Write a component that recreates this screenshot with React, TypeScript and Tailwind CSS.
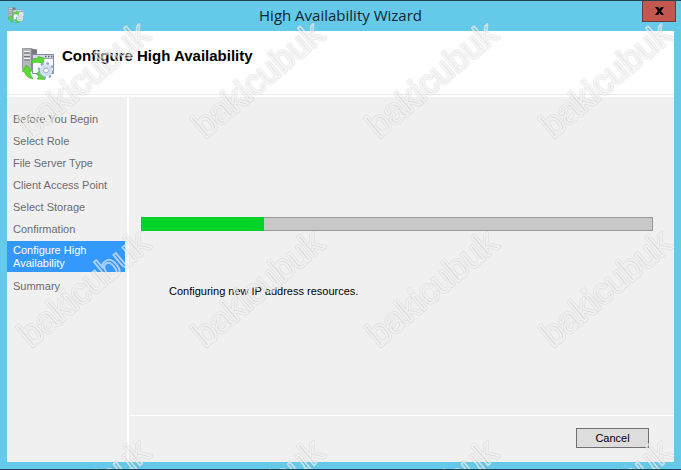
import React from 'react';
import { clsx } from 'clsx';

const steps = [
  'Before You Begin',
  'Select Role',
  'File Server Type',
  'Client Access Point',
  'Select Storage',
  'Confirmation',
  'Configure High Availability',
  'Summary',
];

const current = 'Configure High Availability';
const progress = 24;

const RoleIcon = ({ className }: { className: string }) => (
  <svg viewBox="0 0 32 32" className={className} aria-hidden="true">
    {/* server tower */}
    <path d="M0.500 0.500h9v21h-9z" fill="#b4b7bb" stroke="#85898e" strokeWidth="0.8" />
    <path d="M9.500 0.500l5.500 1v20H9.500z" fill="#777b81" />
    <path d="M2 3.500h6M2 7h6M2 10.500h6" stroke="#f1f3f5" strokeWidth="1.200" />
    <path d="M2 5h6M2 8.500h6M2 12h6" stroke="#60646a" strokeWidth="0.8" />
    {/* window */}
    <path d="M10.500 6.500h21v19h-21z" fill="#f7f8fb" stroke="#8489a0" />
    <path d="M11 7h20v3H11z" fill="#d5d9e5" />
    <path d="M11 10.500h20" stroke="#8489a0" strokeWidth="0.8" />
    <path d="M23 8.500h1.500M26 8.500h1.500M29 8.500h1.500" stroke="#555b78" strokeWidth="1.400" />
    {/* arrows */}
    <path d="M9 16.500c0-4 3-6.500 7-6V8.500l6 1.500-1 6.500-2-1.500c-3.500-1.500-7-1-10 1.500z" fill="#56dc33" stroke="#3eae24" strokeWidth="0.6" />
    <path d="M4.500 17l6 6-2.500.5c.2 3 1.300 5 3 7-4.500 0-8-3-8.500-7L0 24z" fill="#56dc33" stroke="#3eae24" strokeWidth="0.6" />
    <path d="M18 22l5 9.500-8-.5 2-2-2.500-3z" fill="#56dc33" stroke="#3eae24" strokeWidth="0.6" />
    {/* gear */}
    <circle cx="24" cy="22.500" r="7" fill="none" stroke="#8ea6c2" strokeWidth="2.400" strokeDasharray="2.700 2.800" />
    <circle cx="24" cy="22.500" r="4.400" fill="none" stroke="#d3dfec" strokeWidth="3.600" />
    <circle cx="24" cy="22.500" r="2.400" fill="#fff" stroke="#8299b5" strokeWidth="0.8" />
  </svg>
);

const Watermark = () => (
  <svg className="pointer-events-none absolute inset-0 h-full w-full" aria-hidden="true">
    <defs>
      <pattern id="mark" x="11" y="-53" width="174" height="209" patternUnits="userSpaceOnUse">
        <g
          transform="translate(20 191) rotate(-40)"
          fontFamily="'Liberation Sans', Arial, sans-serif"
          fontSize="35"
          fill="none"
          strokeLinejoin="round"
        >
          <text stroke="#000" strokeOpacity="0.1" strokeWidth="3">bakicubuk</text>
          <text stroke="#fff" strokeOpacity="0.6" strokeWidth="2">bakicubuk</text>
        </g>
      </pattern>
    </defs>
    <rect width="100%" height="100%" fill="url(#mark)" />
  </svg>
);

export default function App() {
  return (
    <div className="relative flex min-h-screen flex-col border-y border-[#1d4354] bg-[#65c9ea] font-['Liberation_Sans',Arial,sans-serif] text-[11px] text-black">
      <header className="grid h-[30px] grid-cols-[48px_1fr_48px] items-start">
        <RoleIcon className="mt-1.5 ml-2 size-4" />
        <h1 className="pt-1 text-center font-['Open_Sans','Noto_Sans',sans-serif] text-[15px] leading-[21px] text-[#10272f]">
          High Availability Wizard
        </h1>
        <button
          type="button"
          aria-label="Close"
          className="mr-[5px] flex h-[21px] w-[34px] items-center justify-center justify-self-end border border-t-0 border-[#6d3a3f] bg-[#c4574f]"
        >
          <svg viewBox="0 0 9 8" className="h-2 w-[9px]" aria-hidden="true">
            <path d="M0 0h3l1.500 2L6 0h3L6 4l3 4H6L4.500 6 3 8H0l3-4z" fill="#000" />
          </svg>
        </button>
      </header>

      <div className="mx-[7px] mb-[7px] flex flex-1 flex-col bg-[#f0f0f0]">
        <div className="border-b-2 border-white bg-white">
          <div className="flex h-16 items-start gap-2 border-b border-[#ececec] px-[15px] pt-4">
            <RoleIcon className="mt-px size-8" />
            <h2 className="text-[15px] leading-[18px] font-bold">Configure High Availability</h2>
          </div>
        </div>

        <div className="flex flex-1">
          <nav className="w-[122px] shrink-0 border-r-2 border-white pt-[11px]">
            <ul>
              {steps.map((step) => (
                <li
                  key={step}
                  aria-current={step === current ? 'step' : undefined}
                  className={clsx(
                    'mr-0.5 pl-1.5',
                    step === current
                      ? 'mt-px mb-[3px] bg-[#3399ff] pt-[3px] pr-6 pb-0.5 leading-[13px] text-white'
                      : 'leading-[22px] text-[#6d6d6d]',
                  )}
                >
                  {step}
                </li>
              ))}
            </ul>
          </nav>

          <div className="flex flex-1 flex-col">
            <main className="flex-1 pt-[120px] pr-[21px] pl-3">
              <div
                role="progressbar"
                aria-labelledby="status"
                aria-valuenow={progress}
                className="h-3.5 bg-[#c8c8c8] inset-ring inset-ring-[#999]"
              >
                <div className="h-full bg-[#00d328]" style={{ width: `${progress}%` }} />
              </div>
              <p id="status" className="mt-[52px] pl-7 leading-4">
                Configuring new IP address resources.
              </p>
            </main>

            <footer className="flex h-[47px] justify-end border-t border-white pt-3 pr-[25px]">
              <button type="button" className="h-5 w-[73px] border border-[#707070] bg-[#dddddd]">
                Cancel
              </button>
            </footer>
          </div>
        </div>
      </div>

      <Watermark />
    </div>
  );
}
